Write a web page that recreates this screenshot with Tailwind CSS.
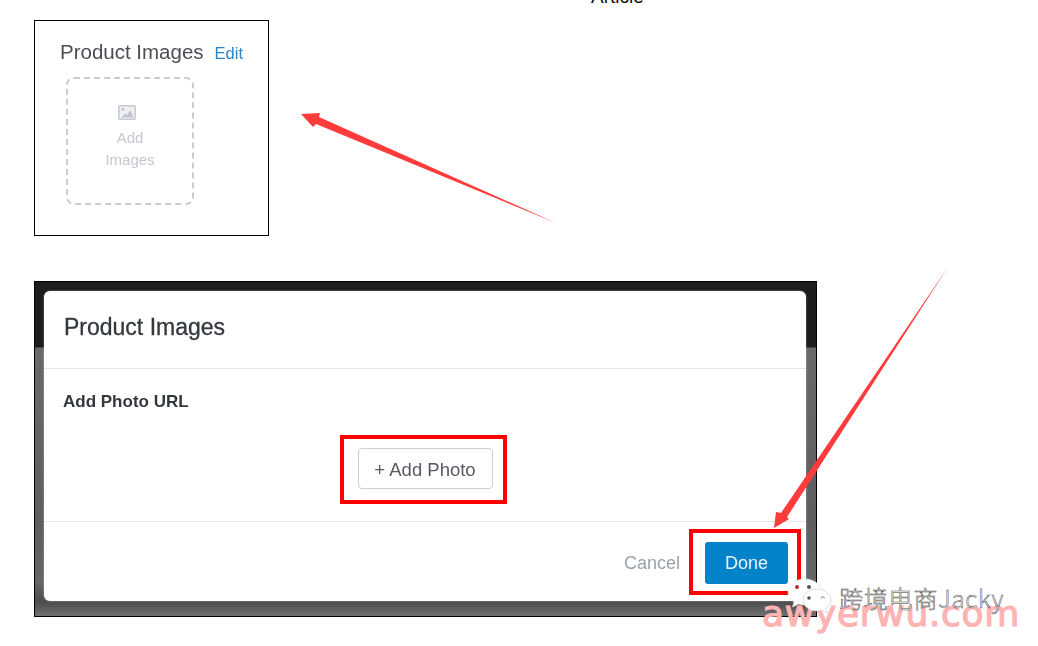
<!DOCTYPE html>
<html><head><meta charset="utf-8"><script src="https://cdn.jsdelivr.net/npm/@tailwindcss/browser@4"></script></head>
<body class="m-0 bg-white">
<div class="relative w-[1038px] h-[646px] overflow-hidden bg-white font-['Liberation_Sans','Noto_Sans_CJK_SC',sans-serif]">
  <div class="absolute left-[591px] top-[-13px] text-[19px] leading-[20px] text-[#111]">Article</div>

  <div class="pt-[20px] pl-[34px]">
    <section class="w-[235px] h-[216px] border border-black bg-white pl-[25px] pt-[19px]">
      <div class="flex items-baseline gap-[11px] h-[24px] blur-[0.35px]">
        <span class="text-[20.5px] leading-[24px] text-[#4a4f55]">Product Images</span>
        <span class="text-[16.5px] leading-[24px] text-[#2b85c9]">Edit</span>
      </div>
      <div class="mt-[13px] ml-[6px] w-[128px] h-[128px] rounded-lg border-2 border-dashed border-[#cccccc] flex flex-col items-center pt-[26px] text-[15px] leading-[22px] text-[#c3c7ce]">
        <svg width="18" height="15" viewBox="0 0 18 15" class="ml-[-6px] mb-[7px]"><rect x="0.8" y="0.8" width="16.4" height="13.4" rx="1.2" fill="#eef0f3" stroke="#c6cad1" stroke-width="1.6"/><path d="M3 12.500l4-4 2 1.500 3.500-5 3 7.500z" fill="#c0c4cc"/><circle cx="5" cy="4.500" r="1.400" fill="#c0c4cc"/></svg>
        <span class="blur-[0.35px]">Add</span>
        <span class="blur-[0.35px]">Images</span>
      </div>
    </section>

    <section class="mt-[45px] w-[783px] h-[336px] border border-black bg-[linear-gradient(#1c1c1c_0,#1c1c1c_65px,#6a6a6a_66px,#5e5e5e_240px,#666666_300px,#4c4c4c_320px,#6e6e6e_333px)] pl-[9px] pt-[9px]">
      <div class="w-[762px] h-[310px] rounded-[6px] bg-white shadow-[0_0_2px_rgba(255,255,255,0.5)] flex flex-col">
        <h2 class="h-[78px] border-b border-[#e5e5e5] pl-[20px] pt-[21px] text-[23px] leading-[30px] font-normal text-[#33383d] [-webkit-text-stroke:0.3px_#33383d] blur-[0.35px]">Product Images</h2>
        <div class="h-[153px] border-b border-[#e8e8e8] pl-[19px] pt-[22px]">
          <div class="text-[17px] leading-[22px] font-bold text-[#33383d] blur-[0.35px]">Add Photo URL</div>
          <div class="flex justify-center pt-[35px]">
            <button class="ml-[-19px] w-[135px] h-[41px] rounded-[4px] border border-[#cfcfcf] bg-white text-[18.500px] text-[#555b62]"><span class="blur-[0.35px] block pt-[2px]">+ Add Photo</span></button>
          </div>
        </div>
        <div class="flex justify-end items-center gap-[25px] pr-[18px] pt-[20px]">
          <span class="text-[18px] text-[#9aa3ab] blur-[0.35px]">Cancel</span>
          <button class="w-[83px] h-[42px] rounded-[3px] bg-[#0282c8] text-[18px] text-[#e8f4fb]"><span class="blur-[0.35px] block">Done</span></button>
        </div>
      </div>
    </section>
  </div>

  <div class="absolute left-[340px] top-[435px] w-[167px] h-[69px] border-4 border-[#ff0000]"></div>
  <div class="absolute left-[689px] top-[529px] w-[112px] h-[66px] border-4 border-[#ff0000]"></div>

  <svg class="absolute left-0 top-0" width="1038" height="646" viewBox="0 0 1038 646">
    <polygon points="301,114 320,113 319,117 556,223 316,124 313,127" fill="#ff3b3b"/>
    <polygon points="948,267 787,517 789,519 774,528 776,512 781,513" fill="#ff3b3b"/>
  </svg>

  <div class="absolute left-[762px] top-[592px] text-[36px] leading-[44px] tracking-[0.7px] font-['DejaVu_Sans',sans-serif] text-[#ffb3b3] [-webkit-text-stroke:1.2px_#ffb3b3]">awyerwu.com</div>
  <div class="absolute left-[839px] top-[583px] text-[24px] leading-[30px] tracking-[0.8px] whitespace-nowrap font-['Noto_Sans_CJK_SC','Liberation_Sans',sans-serif] font-light text-white [-webkit-text-stroke:0.5px_#444444]">跨境电商Jacky</div>
  <svg class="absolute left-[786px] top-[577px]" width="48" height="40" viewBox="0 0 48 40">
    <path d="M19 2c-10 0-17 6-17 13 0 4 2.500 7.500 6 10l-1.500 5 6-3c2 .6 4 1 6.500 1 10 0 17-7 17-13S29 2 19 2z" fill="#fff" stroke="#e2e2e2" stroke-width=".6"/>
    <circle cx="11" cy="10" r="2" fill="#b0303a"/><circle cx="23" cy="10" r="2" fill="#555"/>
    <path d="M31 12c-8 0-14 5-14 11s6 11 14 11c2 0 3.500-.3 5-.8l5 2.800-1.200-4.500C43.500 29.500 45 26.500 45 23c0-6-6-11-14-11z" fill="#fff" stroke="#d0d0d0" stroke-width=".7"/>
    <circle cx="23" cy="21" r="1.800" fill="#555"/><path d="M35 21.500a1.700 1.700 0 0 1 3.400 0" fill="none" stroke="#888"/>
  </svg>
</div>
</body></html>
